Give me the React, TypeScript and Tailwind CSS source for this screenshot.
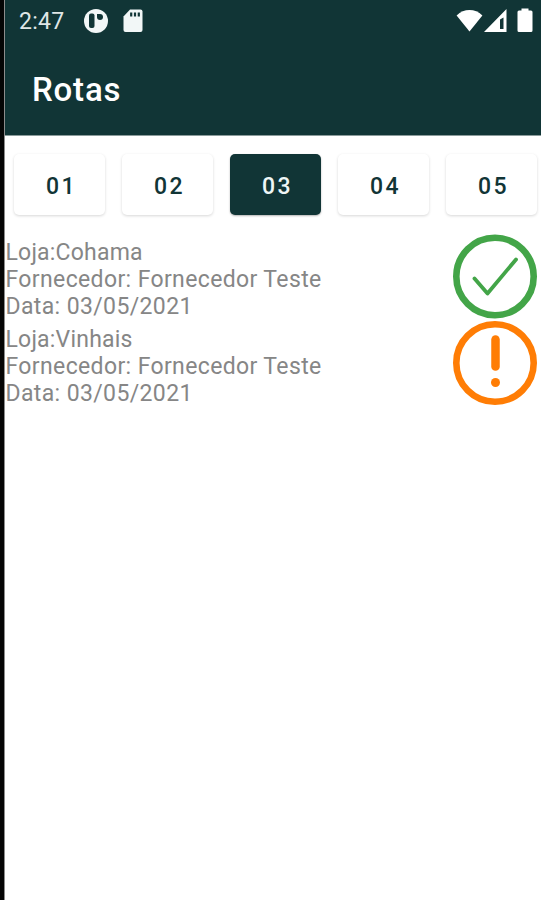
import { useState } from "react";

type Status = "done" | "pending";

const tabs = ["01", "02", "03", "04", "05"];

const routes: { store: string; supplier: string; date: string; status: Status }[] = [
  { store: "Cohama", supplier: "Fornecedor Teste", date: "03/05/2021", status: "done" },
  { store: "Vinhais", supplier: "Fornecedor Teste", date: "03/05/2021", status: "pending" },
];

// Android system bar
function StatusBar() {
  return (
    <div className="flex h-[42px] items-center justify-between pl-[14px] pr-[8px] text-[#f2f7f7]">
      <div className="flex items-center">
        <span className="w-[64px] pt-[2px] text-[23px] leading-[42px] tracking-[0.3px] text-[#dfe6e6]">2:47</span>
        <svg className="h-[26px] w-[26px]" viewBox="0 0 26 26">
          <circle cx="13" cy="13" r="12" fill="currentColor" />
          <rect x="6" y="5.500" width="5.500" height="14.500" rx="2" fill="#113536" />
          <circle cx="17" cy="9" r="3" fill="#113536" />
          <path d="M14 6h3v3h-3z" fill="#113536" />
        </svg>
        <svg className="ml-[14px] h-[24px] w-[20px]" viewBox="0 0 20 24">
          <path
            d="M7 .5h10.500a2 2 0 0 1 2 2v18.500a2 2 0 0 1-2 2h-15a2 2 0 0 1-2-2V7.500z"
            fill="currentColor"
          />
          <path d="M8.200 3.500v4M12 3.500v4M15.800 3.500v4" stroke="#113536" strokeWidth="2.200" />
        </svg>
      </div>
      <div className="flex items-center text-white">
        <svg className="h-[26px] w-[28px]" viewBox="0 0 28 26">
          <path d="M.6 7.500C8 .3 19 .3 26.400 7.500L13.500 23.500z" fill="currentColor" />
        </svg>
        <svg className="h-[26px] w-[24px]" viewBox="0 0 24 26">
          <path d="M22.500 1v23H0zM16 11.500v9.500h3.500v-11.500z" fillRule="evenodd" fill="currentColor" />
        </svg>
        <svg className="ml-[9px] h-[26px] w-[16px]" viewBox="0 0 16 26">
          <path
            d="M4.500 .5h7v2h2.500a1.500 1.500 0 0 1 1.500 1.500v18.500a1.500 1.500 0 0 1-1.500 1.500H2A1.500 1.500 0 0 1 .5 22.500V4A1.500 1.500 0 0 1 2 2.500h2.500z"
            fill="currentColor"
          />
        </svg>
      </div>
    </div>
  );
}

function StatusIcon({ status }: { status: Status }) {
  if (status === "done") {
    return (
      <svg className="h-[86px] w-[86px]" viewBox="0 0 86 86" fill="none" stroke="#43a548">
        <circle cx="43" cy="42.500" r="38.700" strokeWidth="6.600" />
        <path d="M22.500 44.500 35.500 59.500 64 25.500" strokeWidth="3.800" strokeLinecap="round" strokeLinejoin="round" />
      </svg>
    );
  }
  return (
    <svg className="h-[86px] w-[86px]" viewBox="0 0 86 86" fill="none" stroke="#ff7d05">
      <circle cx="43" cy="42" r="38.700" strokeWidth="6.600" />
      <path d="M43.500 18.500v27" strokeWidth="8.500" strokeLinecap="round" />
      <circle cx="43.500" cy="61.500" r="4.500" fill="#ff7d05" stroke="none" />
    </svg>
  );
}

export default function App() {
  const [selected, setSelected] = useState("03");

  return (
    <div className="h-[900px] w-[541px] overflow-hidden border-l-4 border-[#050505] bg-white font-['Roboto',sans-serif]">
      <div className="h-full border-l border-[#8c8c8c]">
        <header className="h-[136px] border-b border-[#8b9b9b] bg-[#113536]">
          <StatusBar />
          <h1 className="pl-[27px] text-[33px] font-medium leading-[95px] tracking-[0.8px] text-white">
            Rotas
          </h1>
        </header>

        <nav className="flex gap-[17px] pl-[9px] pt-[18px]">
          {tabs.map((tab) => (
            <button
              key={tab}
              onClick={() => setSelected(tab)}
              className={`h-[61px] w-[91px] shrink-0 rounded-[5px] pl-[4px] pt-[6px] text-[23px] tracking-[2.5px] ${
                tab === selected
                  ? "bg-[#113536] font-medium text-[#eef6f6] shadow-[0_1px_2px_rgba(0,0,0,0.3)]"
                  : "bg-white font-medium text-[#113536] shadow-[0_1px_3px_rgba(0,0,0,0.16)]"
              }`}
            >
              {tab}
            </button>
          ))}
        </nav>

        <ul className="pt-[19px]">
          {routes.map((route) => (
            <li key={route.store} className="flex h-[87px] justify-between pr-[3px]">
              <div className="pl-[0.5px] pt-[5px] text-[23px] leading-[27px] tracking-[0.37px] text-[#868686]">
                <p className="tracking-[0.2px]">Loja:{route.store}</p>
                <p>Fornecedor: {route.supplier}</p>
                <p>Data: {route.date}</p>
              </div>
              <StatusIcon status={route.status} />
            </li>
          ))}
        </ul>
      </div>
    </div>
  );
}
